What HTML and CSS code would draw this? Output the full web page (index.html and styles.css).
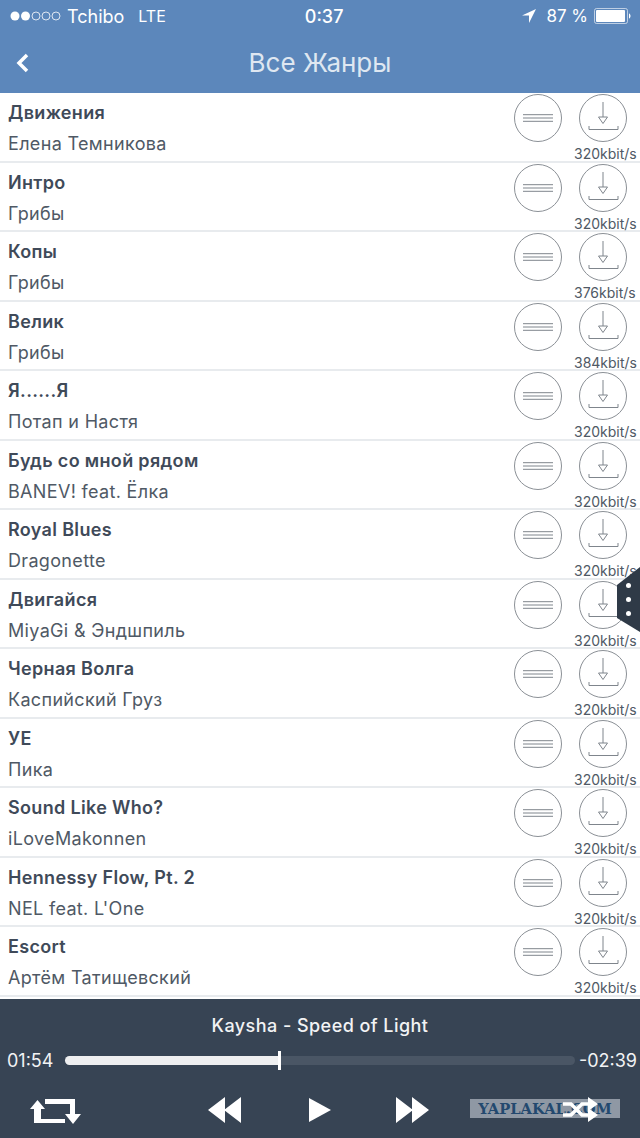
FILE: index.html
```html
<!DOCTYPE html>
<html lang="en">
<head>
    <meta charset="UTF-8">
    <title>Все Жанры</title>
    <link rel="stylesheet" href="styles.css">
</head>
<body>
<svg class="defs" width="0" height="0">
    <symbol id="menu-icon" viewBox="0 0 48 48">
        <circle cx="24" cy="24" r="23.500" fill="none" stroke="#8b9096" stroke-width="1"/>
        <path d="M9 20.700H39M9 24H39M9 27.300H39" fill="none" stroke="#7f858c" stroke-width="1"/>
    </symbol>
    <symbol id="download-icon" viewBox="0 0 48 48">
        <circle cx="24" cy="24" r="23.500" fill="none" stroke="#8b9096" stroke-width="1"/>
        <path d="M24 8V23M19.500 23H28.500L24 29.500ZM10 32V35.500H39V32" fill="none" stroke="#7f858c" stroke-width="1"/>
    </symbol>
</svg>
<div id="wrapper">
    <header class="top">
        <div class="status">
            <svg class="signal" width="53" height="12" viewBox="0 0 53 12">
                <circle cx="6" cy="6" r="4.500" fill="#fff"/>
                <circle cx="16.500" cy="6" r="4.500" fill="#fff"/>
                <circle cx="27" cy="6" r="4" fill="none" stroke="#fff" stroke-width=".8"/>
                <circle cx="37" cy="6" r="4" fill="none" stroke="#fff" stroke-width=".8"/>
                <circle cx="47" cy="6" r="4" fill="none" stroke="#fff" stroke-width=".8"/>
            </svg>
            <span class="carrier">Tchibo</span>
            <span class="network">LTE</span>
            <span class="clock">0:37</span>
            <svg class="locate" width="14" height="14" viewBox="0 0 14 14"><path d="M14 0L0 6.500H7V14Z" fill="#fff"/></svg>
            <span class="percent">87 %</span>
            <svg class="battery" width="38" height="16" viewBox="0 0 38 16">
                <rect x=".5" y=".5" width="33" height="15" rx="2" fill="none" stroke="#fff" stroke-opacity=".6"/>
                <rect x="2" y="2" width="29" height="12" rx="1" fill="#fff"/>
                <path d="M35 5.500C37 6 37 10 35 10.500Z" fill="#fff"/>
            </svg>
        </div>
        <div class="nav">
            <svg class="back" width="14" height="20" viewBox="0 0 14 20"><path d="M11 2L3 10L11 18" fill="none" stroke="#fff" stroke-width="3.500"/></svg>
            <h1>Все Жанры</h1>
        </div>
    </header>

    <div class="tracks">
        <div class="track">
            <div class="info"><b>Движения</b><span>Елена Темникова</span></div>
            <svg class="round"><use href="#menu-icon"/></svg>
            <div class="save"><svg class="round"><use href="#download-icon"/></svg><span>320kbit/s</span></div>
        </div>
        <div class="track">
            <div class="info"><b>Интро</b><span>Грибы</span></div>
            <svg class="round"><use href="#menu-icon"/></svg>
            <div class="save"><svg class="round"><use href="#download-icon"/></svg><span>320kbit/s</span></div>
        </div>
        <div class="track">
            <div class="info"><b>Копы</b><span>Грибы</span></div>
            <svg class="round"><use href="#menu-icon"/></svg>
            <div class="save"><svg class="round"><use href="#download-icon"/></svg><span>376kbit/s</span></div>
        </div>
        <div class="track">
            <div class="info"><b>Велик</b><span>Грибы</span></div>
            <svg class="round"><use href="#menu-icon"/></svg>
            <div class="save"><svg class="round"><use href="#download-icon"/></svg><span>384kbit/s</span></div>
        </div>
        <div class="track">
            <div class="info"><b>Я......Я</b><span>Потап и Настя</span></div>
            <svg class="round"><use href="#menu-icon"/></svg>
            <div class="save"><svg class="round"><use href="#download-icon"/></svg><span>320kbit/s</span></div>
        </div>
        <div class="track">
            <div class="info"><b>Будь со мной рядом</b><span>BANEV! feat. Ёлка</span></div>
            <svg class="round"><use href="#menu-icon"/></svg>
            <div class="save"><svg class="round"><use href="#download-icon"/></svg><span>320kbit/s</span></div>
        </div>
        <div class="track">
            <div class="info"><b>Royal Blues</b><span>Dragonette</span></div>
            <svg class="round"><use href="#menu-icon"/></svg>
            <div class="save"><svg class="round"><use href="#download-icon"/></svg><span>320kbit/s</span></div>
        </div>
        <div class="track">
            <div class="info"><b>Двигайся</b><span>MiyaGi &amp; Эндшпиль</span></div>
            <svg class="round"><use href="#menu-icon"/></svg>
            <div class="save"><svg class="round"><use href="#download-icon"/></svg><span>320kbit/s</span></div>
        </div>
        <div class="track">
            <div class="info"><b>Черная Волга</b><span>Каспийский Груз</span></div>
            <svg class="round"><use href="#menu-icon"/></svg>
            <div class="save"><svg class="round"><use href="#download-icon"/></svg><span>320kbit/s</span></div>
        </div>
        <div class="track">
            <div class="info"><b>УЕ</b><span>Пика</span></div>
            <svg class="round"><use href="#menu-icon"/></svg>
            <div class="save"><svg class="round"><use href="#download-icon"/></svg><span>320kbit/s</span></div>
        </div>
        <div class="track">
            <div class="info"><b>Sound Like Who?</b><span>iLoveMakonnen</span></div>
            <svg class="round"><use href="#menu-icon"/></svg>
            <div class="save"><svg class="round"><use href="#download-icon"/></svg><span>320kbit/s</span></div>
        </div>
        <div class="track">
            <div class="info"><b>Hennessy Flow, Pt. 2</b><span>NEL feat. L'One</span></div>
            <svg class="round"><use href="#menu-icon"/></svg>
            <div class="save"><svg class="round"><use href="#download-icon"/></svg><span>320kbit/s</span></div>
        </div>
        <div class="track">
            <div class="info"><b>Escort</b><span>Артём Татищевский</span></div>
            <svg class="round"><use href="#menu-icon"/></svg>
            <div class="save"><svg class="round"><use href="#download-icon"/></svg><span>320kbit/s</span></div>
        </div>
    </div>

    <div class="player">
        <div class="now">Kaysha - Speed of Light</div>
        <div class="progress">
            <span>01:54</span>
            <div class="bar"><div class="done" style="width:41.8%"></div><div class="thumb"></div></div>
            <span>-02:39</span>
        </div>
        <div class="controls">
            <svg class="repeat" width="52" height="27" viewBox="0 0 52 27">
                <path d="M1 12L8.500 3L16 12H12V22H36V26H5V12ZM16 2H46V17H52L44 27L36 17H41V7H16Z" fill="#fff"/>
            </svg>
            <svg class="rewind" width="34" height="26" viewBox="0 0 34 26"><path d="M17 0V26L0 13ZM33 0V26L16 13Z" fill="#fff"/></svg>
            <svg class="play" width="24" height="26" viewBox="0 0 24 26"><path d="M1 1L23 13L1 25Z" fill="#fff"/></svg>
            <svg class="forward" width="34" height="26" viewBox="0 0 34 26"><path d="M1 0V26L18 13ZM17 0V26L34 13Z" fill="#fff"/></svg>
            <svg class="shuffle" width="38" height="26" viewBox="0 0 38 26">
                <path d="M1 7H9L20 18H30M1 18H9L20 7H30" fill="none" stroke="#fff" stroke-width="3.500"/>
                <path d="M26 0L36 7L26 14ZM26 11L36 18L26 25Z" fill="#fff"/>
            </svg>
        </div>
    </div>
</div>
<div class="handle">
    <i></i><i></i><i></i>
</div>
<div class="watermark">YAPLAKAL.COM</div>
</body>
</html>
```

FILE: styles.css
```css
html{
    width:100%;
    height:100%;
    margin:0px;
    padding:0px;
}
body{
    width:100%;
    height:100%;
    margin:0px;
    padding:0px;
    background-color:#fff;
    font-family:"Inter","Liberation Sans",sans-serif;
    overflow:hidden;
}
.defs{
    position:absolute;
}
#wrapper{
    display:flex;
    flex-direction:column;
    height:1138px;
}
.top{
    height:93px;
    background-color:#5c87bb;
    color:#fff;
}
.status{
    display:flex;
    align-items:center;
    height:32px;
    padding:0px 8px 0px 9px;
    font-size:18px;
}
.carrier{
    margin-left:5px;
}
.network{
    margin-left:14px;
    font-size:16px;
}
.clock{
    margin-left:139px;
    font-weight:500;
}
.locate{
    margin-left:auto;
}
.percent{
    margin-left:10px;
    font-size:17px;
}
.battery{
    margin-left:6px;
}
.nav{
    display:flex;
    align-items:center;
    height:61px;
    padding-left:16px;
}
h1{
    flex:1;
    margin:0px;
    margin-left:-30px;
    text-align:center;
    font-size:26px;
    font-weight:400;
    color:#dfe7f1;
}
.tracks{
    display:grid;
    grid-auto-rows:69.54px;
    height:904px;
}
.track{
    display:flex;
    align-items:flex-start;
    padding-left:8px;
    border-bottom:2px solid #e8ebee;
    box-sizing:border-box;
}
.info{
    flex:1;
    display:flex;
    flex-direction:column;
    gap:10px;
    padding-top:9px;
    color:#3f4a59;
    font-size:18px;
    line-height:21px;
    letter-spacing:.33px;
}
.info b{
    font-weight:600;
}
.info span{
    color:#4f5965;
}
.round{
    width:48px;
    height:48px;
    flex:none;
    margin-top:1px;
}
.save{
    display:flex;
    flex-direction:column;
    width:64px;
    margin:0px 2px 0px 12px;
}
.save .round{
    margin-left:5px;
}
.save span{
    margin-top:3px;
    color:#4f5965;
    font-size:14px;
    line-height:18px;
    white-space:nowrap;
}
.player{
    flex:1;
    margin-top:2px;
    background-color:#374454;
    color:#f2f3f4;
}
.now{
    margin-top:16px;
    text-align:center;
    font-size:18px;
    font-weight:500;
    line-height:22px;
    letter-spacing:.45px;
}
.progress{
    display:flex;
    align-items:center;
    height:24px;
    margin-top:11px;
    padding:0px 3px 0px 7px;
    font-size:18px;
}
.bar{
    flex:1;
    position:relative;
    height:9px;
    margin:0px 4px 0px 12px;
    border-radius:5px;
    background-color:#4a5665;
}
.done{
    height:100%;
    border-radius:5px 0px 0px 5px;
    background-color:#eeeff0;
}
.thumb{
    position:absolute;
    top:-5px;
    left:41.8%;
    width:3px;
    height:19px;
    background-color:#fff;
}
.controls{
    display:flex;
    align-items:center;
    height:28px;
    margin-top:24px;
    padding-left:29px;
    position:relative;
    z-index:2;
}
.rewind{
    margin-left:127px;
}
.play{
    margin-left:66px;
}
.forward{
    margin-left:63px;
}
.shuffle{
    margin-left:133px;
}
.handle{
    position:absolute;
    top:567px;
    right:0px;
    width:23px;
    height:65px;
    display:flex;
    flex-direction:column;
    align-items:center;
    justify-content:center;
    gap:9px;
    background-color:#2f3a47;
    clip-path:polygon(0 18px,100% 0,100% 100%,0 51px);
}
.handle i{
    width:5px;
    height:5px;
    border-radius:50%;
    background-color:#fff;
}
.watermark{
    position:absolute;
    top:1099px;
    left:470px;
    width:150px;
    height:19px;
    background-color:rgba(190,198,208,.65);
    color:#23496f;
    font-family:"DejaVu Serif",serif;
    font-weight:700;
    font-size:14.7px;
    line-height:19px;
    text-align:center;
}
```
